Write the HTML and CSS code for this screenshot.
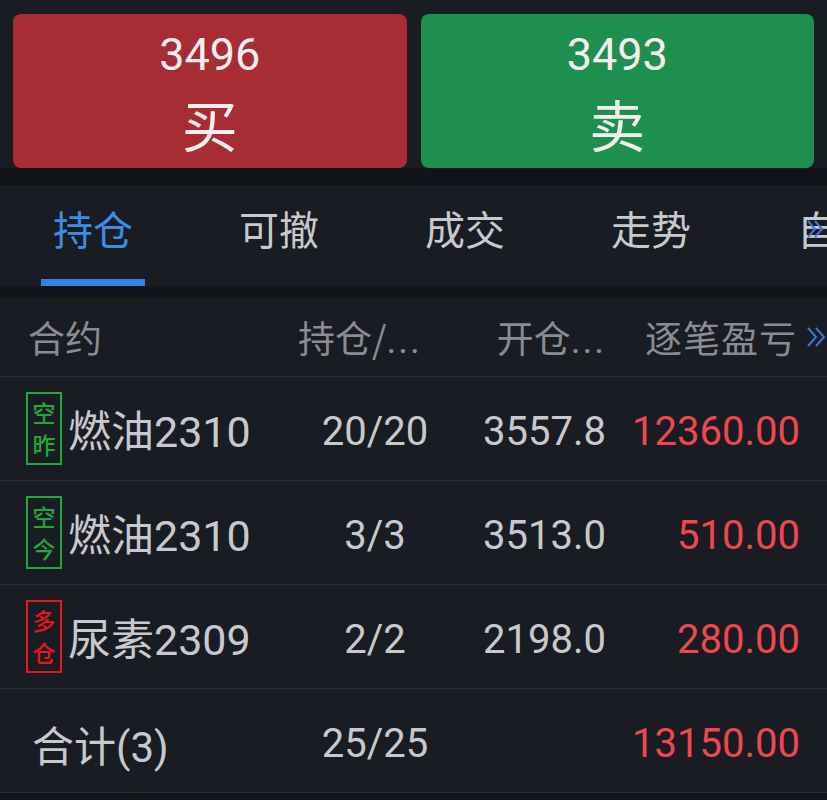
FILE: index.html
```html
<!DOCTYPE html>
<html lang="zh">
<head>
<meta charset="utf-8">
<link rel="stylesheet" href="styles.css">
</head>
<body>
<div class="app">
  <div class="trade">
    <div class="btn buy"><span class="price">3496</span><span class="act">买</span></div>
    <div class="btn sell"><span class="price">3493</span><span class="act">卖</span></div>
  </div>
  <div class="tabs">
    <div class="tab active">持仓</div>
    <div class="tab">可撤</div>
    <div class="tab">成交</div>
    <div class="tab">走势</div>
    <div class="tab">自选</div>
    <svg class="more tabmore" width="18" height="20" viewBox="0 0 18 20"><path d="M2 2 L9 10 L2 18 M9 2 L16 10 L9 18" fill="none" stroke="#3b78d6" stroke-width="2"/></svg>
  </div>
  <div class="table">
    <div class="row head">
      <div class="c1">合约</div>
      <div class="c2 hl">持仓/<span class="dots">...</span></div>
      <div class="c3">开仓<span class="dots">...</span></div>
      <div class="c4">逐笔盈亏</div>
      <div class="c5"><svg width="20" height="24" viewBox="0 0 20 24"><path d="M2 3 L10 12 L2 21 M10 3 L18 12 L10 21" fill="none" stroke="#3b78d6" stroke-width="2"/></svg></div>
    </div>
    <div class="row">
      <div class="c1"><span class="tag green">空<br>昨</span><span class="name">燃油2310</span></div>
      <div class="c2">20/20</div>
      <div class="c3">3557.8</div>
      <div class="c4 red">12360.00</div>
      <div class="c5"></div>
    </div>
    <div class="row">
      <div class="c1"><span class="tag green">空<br>今</span><span class="name">燃油2310</span></div>
      <div class="c2">3/3</div>
      <div class="c3">3513.0</div>
      <div class="c4 red">510.00</div>
      <div class="c5"></div>
    </div>
    <div class="row">
      <div class="c1"><span class="tag redtag">多<br>仓</span><span class="name">尿素2309</span></div>
      <div class="c2">2/2</div>
      <div class="c3">2198.0</div>
      <div class="c4 red">280.00</div>
      <div class="c5"></div>
    </div>
    <div class="row total">
      <div class="c1"><span class="tname">合计(3)</span></div>
      <div class="c2">25/25</div>
      <div class="c3"></div>
      <div class="c4 red">13150.00</div>
      <div class="c5"></div>
    </div>
  </div>
</div>
</body>
</html>
```
FILE: styles.css
```css
* { box-sizing: border-box; }
html, body { margin: 0; padding: 0; }
body {
  background: #12141a;
  font-family: "Roboto", "Noto Sans CJK SC", sans-serif;
  color: #c8c9cd;
  width: 827px;
  height: 800px;
  overflow: hidden;
}
.app { display: flex; flex-direction: column; }

.trade {
  display: flex;
  gap: 14px;
  padding: 14px 13px 0 13px;
  height: 168px;
  background: #1a1c24;
}
.btn {
  flex: 1;
  height: 154px;
  border-radius: 8px;
  display: flex;
  flex-direction: column;
  align-items: center;
  color: #f3eeee;
  padding-top: 17px;
}
.buy { background: #a62d34; }
.sell { background: #1f8f50; }
.price { font-size: 45px; line-height: 48px; }
.act { font-size: 56px; line-height: 60px; margin-top: 14px; font-family: "Noto Sans CJK SC", sans-serif; }

.tabs {
  margin-top: 17px;
  height: 101px;
  background: #1a1c24;
  display: flex;
  position: relative;
  overflow: hidden;
}
.tab {
  flex: 0 0 186px;
  text-align: center;
  font-size: 40px;
  line-height: 40px;
  padding-top: 23px;
  color: #c8c9cd;
  font-family: "Noto Sans CJK SC", sans-serif;
  position: relative;
}
.tab.active { color: #3a8ee8; }
.tab.active::after {
  content: "";
  position: absolute;
  left: 41px;
  width: 104px;
  bottom: 0;
  height: 7px;
  background: #2f86e8;
}
.tabmore { position: absolute; left: 806px; top: 34px; }

.table { margin-top: 12px; background: #1a1c24; }
.row {
  display: grid;
  grid-template-columns: 270px 210px 126px 194px 27px;
  align-items: center;
  height: 104px;
  border-bottom: 1px solid #2a2d37;
  font-size: 40px;
  padding-top: 6px;
}
.row.head { height: 79px; font-size: 37px; color: #8b8c91; font-family: "Noto Sans CJK SC", sans-serif; padding-top: 0; }
.dots { font-family: "Roboto", sans-serif; letter-spacing: 2px; }
.head .c1 { padding-left: 28px; }
.head .c2.hl { text-align: left; padding-left: 28px; }
.head .c3 { padding-right: 0; }
.head .c4 { padding-right: 3px; letter-spacing: 1px; }
.c1 { display: flex; align-items: center; padding-left: 26px; }
.c2 { text-align: center; }
.c3 { text-align: right; }
.c4 { text-align: right; }
.c5 { display: flex; align-items: center; padding-left: 6px; }
.red { color: #ef4750; }
.tag {
  width: 36px;
  height: 73px;
  border: 2px solid;
  font-size: 23px;
  line-height: 32px;
  text-align: center;
  font-family: "Noto Sans CJK SC", sans-serif;
  font-weight: 500;
  padding-top: 2px;
  margin-right: 6px;
  margin-top: -6px;
}
.tag.green { color: #1fa83c; border-color: #1fa83c; }
.tag.redtag { color: #e8161a; border-color: #e8161a; }
.name { font-size: 43px; color: #c8c9cd; margin-top: -8px; }
.tname { padding-left: 6px; font-size: 42px; }
```
